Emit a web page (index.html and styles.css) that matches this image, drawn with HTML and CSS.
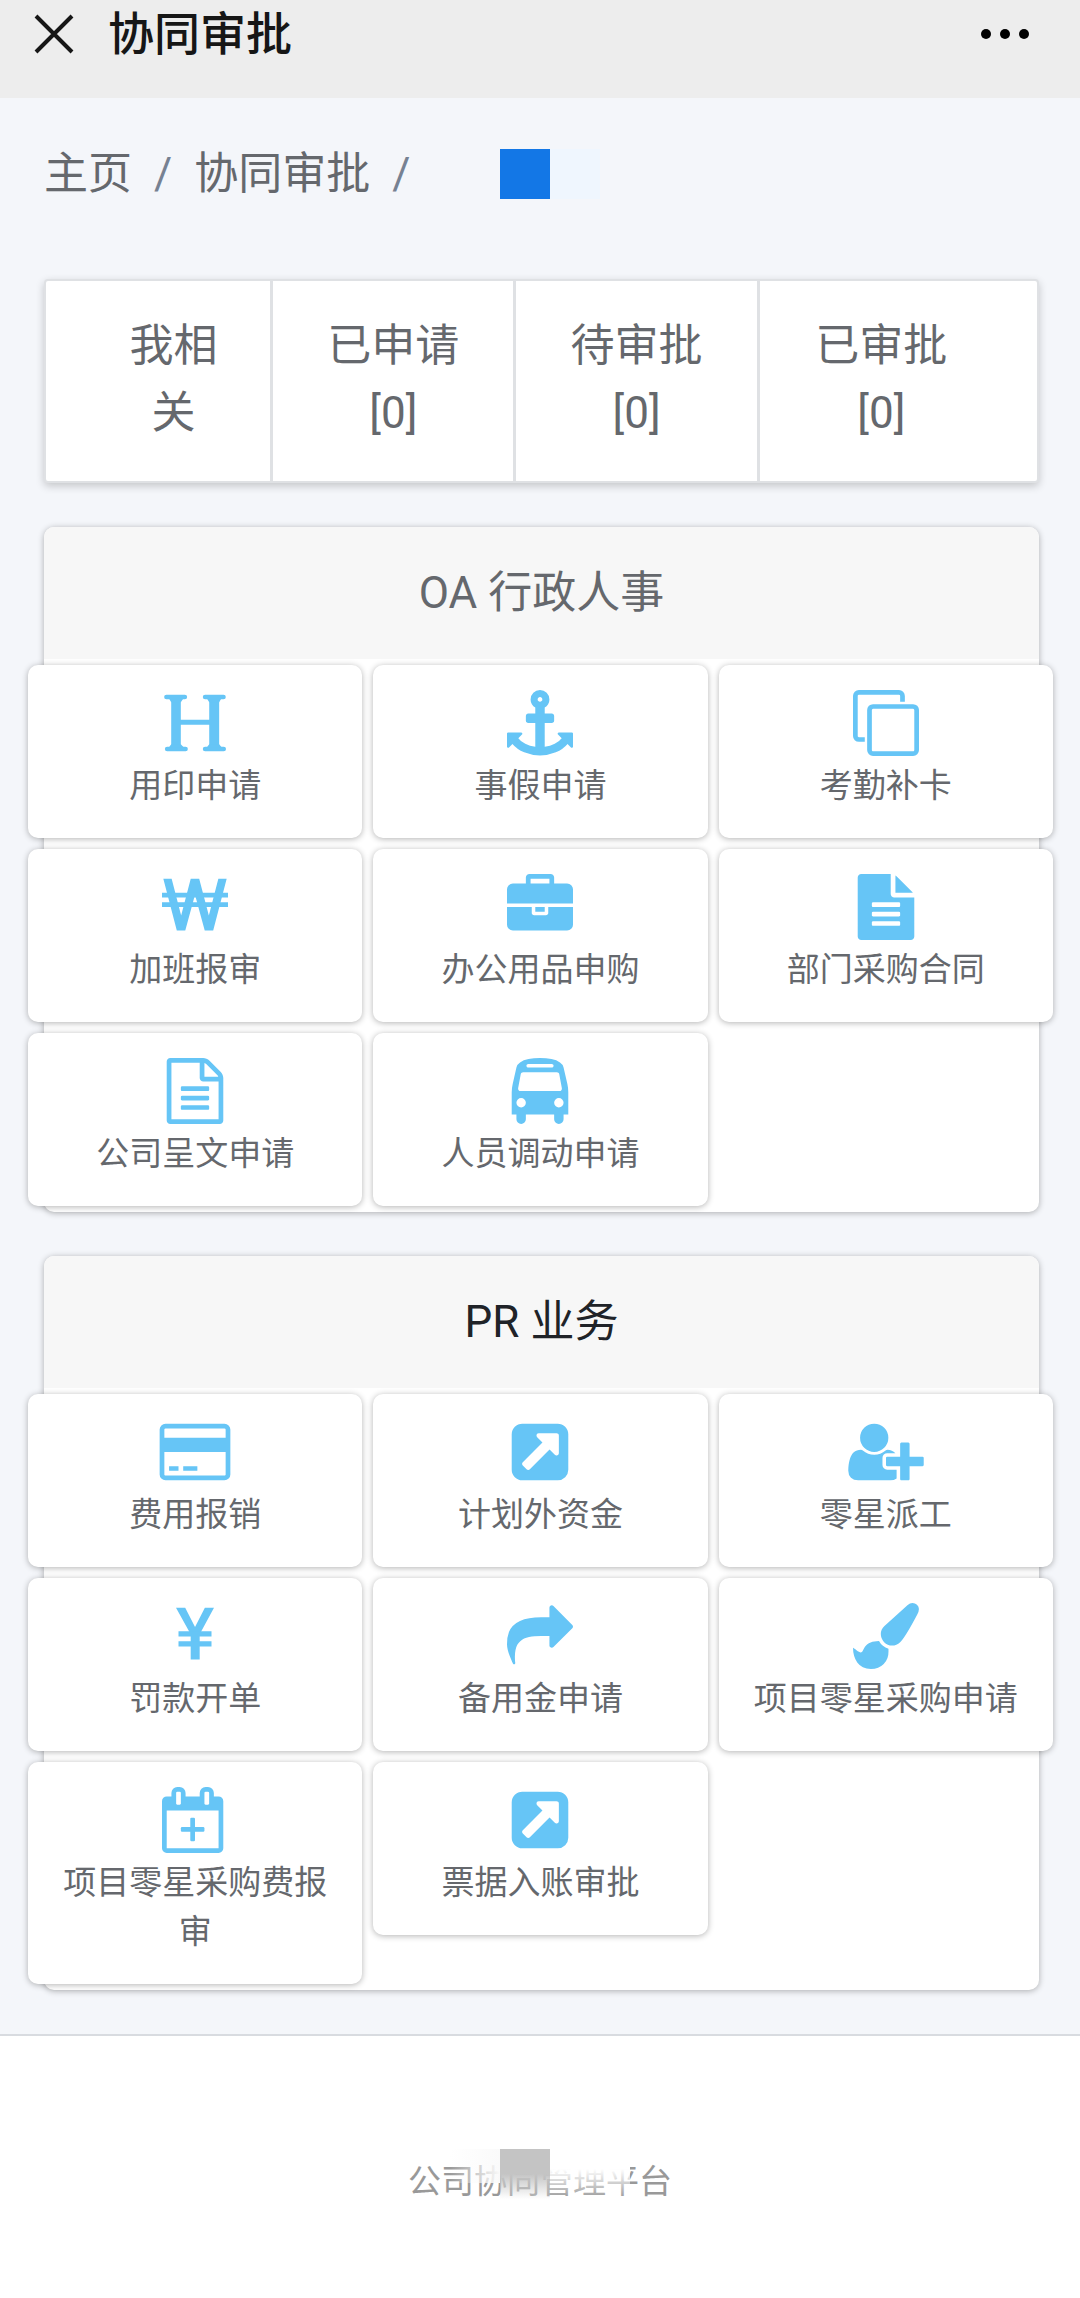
FILE: index.html
```html
<!DOCTYPE html>
<html lang="zh-CN">
<head>
<meta charset="utf-8">
<meta name="viewport" content="width=device-width, initial-scale=1">
<title>协同审批</title>
<link rel="stylesheet" href="styles.css">
</head>
<body>
<header class="topbar">
  <button class="icon-button" type="button" aria-label="关闭">
    <svg class="close-icon" viewBox="0 0 40 40"><path d="M2 2L38 38M38 2L2 38"/></svg>
  </button>
  <h1 class="topbar-title">协同审批</h1>
  <button class="icon-button" type="button" aria-label="更多">
    <svg class="more-icon" viewBox="0 0 50 12"><circle cx="6" cy="6" r="5"/><circle cx="25" cy="6" r="5"/><circle cx="44" cy="6" r="5"/></svg>
  </button>
</header>

<main class="content">
  <nav class="breadcrumb" aria-label="导航">
    <a href="#">主页</a>
    <span class="slash">/</span>
    <a href="#">协同审批</a>
    <span class="slash">/</span>
    <span class="masked"></span>
  </nav>

  <nav class="tabs" aria-label="审批">
    <a class="tab" href="#">我相关</a>
    <a class="tab" href="#">已申请 [0]</a>
    <a class="tab" href="#">待审批 [0]</a>
    <a class="tab" href="#">已审批 [0]</a>
  </nav>

  <section class="card">
    <h2 class="card-header">OA 行政人事</h2>
    <div class="tiles">
      <a class="tile" href="#">
        <svg class="icon" viewBox="0 0 1792 1792"><path d="M250 150H511V810H1282V150H1552V1640H1282V945H511V1640H250Z"/><path class="serif" d="M120 192H620M1170 192H1670M140 1604H640M1170 1604H1676"/><path d="M190 230H580L511 330H250ZM1220 230H1610L1552 330H1282ZM250 1470H511L600 1570H180ZM1282 1470H1552L1630 1570H1210Z"/></svg>
        <span>用印申请</span>
      </a>
      <a class="tile" href="#">
        <svg class="icon" viewBox="0 0 1792 1792"><path d="M960 256q0-26-19-45t-45-19-45 19-19 45 19 45 45 19 45-19 19-45zm832 928v352q0 22-20 30-8 2-12 2-12 0-23-9l-93-93q-119 143-318.500 226.500t-429.500 83.500-429.500-83.500-318.500-226.500l-93 93q-9 9-23 9-4 0-12-2-20-8-20-30v-352q0-14 9-23t23-9h352q22 0 30 20 8 19-7 35l-100 100q67 91 189.500 153.500t271.500 82.500v-647h-192q-26 0-45-19t-19-45v-128q0-26 19-45t45-19h192v-163q-58-34-93-92.500t-35-128.500q0-106 75-181t181-75 181 75 75 181q0 70-35 128.500t-93 92.500v163h192q26 0 45 19t19 45v128q0 26-19 45t-45 19h-192v647q149-20 271.500-82.500t189.500-153.500l-100-100q-15-16-7-35 8-20 30-20h352q14 0 23 9t9 23z"/></svg>
        <span>事假申请</span>
      </a>
      <a class="tile" href="#">
        <svg class="icon" viewBox="0 0 1792 1792"><path d="M1664 1632v-1088q0-13-9.500-22.500t-22.500-9.500h-1088q-13 0-22.500 9.500t-9.500 22.500v1088q0 13 9.500 22.500t22.500 9.500h1088q13 0 22.500-9.500t9.500-22.500zm128-1088v1088q0 66-47 113t-113 47h-1088q-66 0-113-47t-47-113v-1088q0-66 47-113t113-47h1088q66 0 113 47t47 113zm-384-384v160h-128v-160q0-13-9.500-22.500t-22.500-9.500h-1088q-13 0-22.500 9.500t-9.500 22.500v1088q0 13 9.500 22.500t22.500 9.500h160v128h-160q-66 0-113-47t-47-113v-1088q0-66 47-113t113-47h1088q66 0 113 47t47 113z"/></svg>
        <span>考勤补卡</span>
      </a>
      <a class="tile" href="#">
        <svg class="icon" viewBox="0 0 1792 1792"><path d="M36 128H262L520 1130 780 128H1010L1272 1130 1530 128H1756L1390 1536H1160L896 560 632 1536H402Z"/><path d="M0 512H1792V640H0ZM0 768H1792V896H0Z"/></svg>
        <span>加班报审</span>
      </a>
      <a class="tile" href="#">
        <svg class="icon" viewBox="0 0 1792 1792"><path d="M640 256h512v-128h-512v128zm1152 640v480q0 66-47 113t-113 47h-1472q-66 0-113-47t-47-113v-480h672v160q0 26 19 45t45 19h320q26 0 45-19t19-45v-160h672zm-768 0v128h-256v-128h256zm768-480v384h-1792v-384q0-66 47-113t113-47h352v-160q0-40 28-68t68-28h576q40 0 68 28t28 68v160h352q66 0 113 47t47 113z"/></svg>
        <span>办公用品申购</span>
      </a>
      <a class="tile" href="#">
        <svg class="icon" viewBox="0 0 1792 1792"><path d="M1596 476q14 14 28 36h-472v-472q22 14 36 28zm-476 164h544v1056q0 40-28 68t-68 28h-1344q-40 0-68-28t-28-68v-1600q0-40 28-68t68-28h800v544q0 40 28 68t68 28zm160 736v-64q0-14-9-23t-23-9h-704q-14 0-23 9t-9 23v64q0 14 9 23t23 9h704q14 0 23-9t9-23zm0-256v-64q0-14-9-23t-23-9h-704q-14 0-23 9t-9 23v64q0 14 9 23t23 9h704q14 0 23-9t9-23zm0-256v-64q0-14-9-23t-23-9h-704q-14 0-23 9t-9 23v64q0 14 9 23t23 9h704q14 0 23-9t9-23z"/></svg>
        <span>部门采购合同</span>
      </a>
      <a class="tile" href="#">
        <svg class="icon" viewBox="0 0 1792 1792"><path d="M1596 380q28 28 48 76t20 88v1152q0 40-28 68t-68 28h-1344q-40 0-68-28t-28-68v-1600q0-40 28-68t68-28h896q40 0 88 20t76 48zm-444-244v376h376q-10-29-22-41l-313-313q-12-12-41-22zm384 1528v-1024h-416q-40 0-68-28t-28-68v-416h-768v1536h1280zm-1024-864q0-14 9-23t23-9h704q14 0 23 9t9 23v64q0 14-9 23t-23 9h-704q-14 0-23-9t-9-23v-64zm736 224q14 0 23 9t9 23v64q0 14-9 23t-23 9h-704q-14 0-23-9t-9-23v-64q0-14 9-23t23-9h704zm0 256q14 0 23 9t9 23v64q0 14-9 23t-23 9h-704q-14 0-23-9t-9-23v-64q0-14 9-23t23-9h704z"/></svg>
        <span>公司呈文申请</span>
      </a>
      <a class="tile" href="#">
        <svg class="icon" viewBox="0 0 1792 1792"><path d="M512 1216q0-53-37.500-90.500t-90.500-37.500-90.500 37.500-37.500 90.500 37.500 90.500 90.500 37.500 90.500-37.500 37.500-90.500zm1024 0q0-53-37.500-90.500t-90.500-37.500-90.500 37.500-37.500 90.500 37.500 90.500 90.500 37.500 90.500-37.500 37.500-90.500zm-46-396l-72-384q-5-23-22.500-37.500t-40.500-14.500h-918q-23 0-40.500 14.500t-22.500 37.500l-72 384q-5 30 14 53t49 23h1062q30 0 49-23t14-53zm-226-612q0-20-14-34t-34-14h-640q-20 0-34 14t-14 34 14 34 34 14h640q20 0 34-14t14-34zm400 725v603h-128v128q0 53-37.500 90.500t-90.500 37.500-90.500-37.500-37.500-90.500v-128h-768v128q0 53-37.500 90.500t-90.500 37.500-90.500-37.500-37.500-90.500v-128h-128v-603q0-112 25-223l103-454q9-78 97.500-137t230-89 312.500-30 312.500 30 230 89 97.500 137l105 454q23 102 23 223z"/></svg>
        <span>人员调动申请</span>
      </a>
    </div>
  </section>

  <section class="card">
    <h2 class="card-header card-header-dark">PR 业务</h2>
    <div class="tiles">
      <a class="tile" href="#">
        <svg class="icon" viewBox="64 0 1792 1792"><path d="M1760 128q66 0 113 47t47 113v1216q0 66-47 113t-113 47h-1600q-66 0-113-47t-47-113v-1216q0-66 47-113t113-47h1600zm-1600 128q-13 0-22.500 9.500t-9.500 22.500v224h1664v-224q0-13-9.500-22.500t-22.500-9.500h-1600zm1600 1280q13 0 22.500-9.500t9.500-22.500v-608h-1664v608q0 13 9.500 22.500t22.500 9.500h1600zm-1504-128v-128h256v128h-256zm384 0v-128h384v128h-384z"/></svg>
        <span>费用报销</span>
      </a>
      <a class="tile" href="#">
        <svg class="icon" viewBox="0 0 1792 1792"><path d="M1408 928v-480q0-26-19-45t-45-19h-480q-42 0-59 39-17 41 14 70l144 144-534 534q-19 19-19 45t19 45l102 102q19 19 45 19t45-19l534-534 144 144q18 19 45 19 12 0 25-5 39-17 39-59zm256-512v960q0 119-84.500 203.500t-203.500 84.500h-960q-119 0-203.500-84.500t-84.500-203.500v-960q0-119 84.500-203.500t203.500-84.500h960q119 0 203.500 84.500t84.500 203.500z"/></svg>
        <span>计划外资金</span>
      </a>
      <a class="tile" href="#">
        <svg class="icon" viewBox="128 0 1792 1792"><path d="M704 896q-159 0-271.500-112.500t-112.500-271.500 112.500-271.500 271.500-112.500 271.500 112.500 112.500 271.500-112.500 271.500-271.500 112.500zm960 128h352q13 0 22.500 9.500t9.500 22.500v192q0 13-9.500 22.500t-22.500 9.500h-352v352q0 13-9.500 22.500t-22.500 9.500h-192q-13 0-22.500-9.500t-9.500-22.500v-352h-352q-13 0-22.500-9.500t-9.500-22.500v-192q0-13 9.500-22.500t22.500-9.500h352v-352q0-13 9.500-22.500t22.500-9.500h192q13 0 22.500 9.500t9.500 22.500v352zm-736 224q0 52 38 90t90 38h256v238q-68 50-171 50h-874q-121 0-194-69t-73-190q0-53 3.500-103.500t14-109 26.500-108.500 43-97.500 62-81 85.500-53.500 111.500-20q19 0 39 17 79 61 154.500 91.500t164.500 30.500 164.500-30.500 154.500-91.500q20-17 39-17 132 0 217 96h-223q-52 0-90 38t-38 90v192z"/></svg>
        <span>零星派工</span>
      </a>
      <a class="tile" href="#">
        <svg class="icon" viewBox="0 0 1792 1792"><path d="M380 128H630L897 650 1164 128H1412L1023 850V1536H779V850Z"/><path d="M448 768H1344V912H448ZM448 1040H1344V1184H448Z"/></svg>
        <span>罚款开单</span>
      </a>
      <a class="tile" href="#">
        <svg class="icon" viewBox="0 0 1792 1792"><path d="M1792 640q0 26-19 45l-512 512q-19 19-45 19t-45-19-19-45v-256h-224q-98 0-175.500 6t-154 21.500-133 42.500-105.500 69.500-80 101-48.500 138.500-17.500 181q0 55 5 123 0 6 2.500 23.500t2.500 26.500q0 15-8.500 25t-23.500 10q-16 0-28-17-7-9-13-22t-13.500-30-10.500-24q-127-285-127-451 0-199 53-333 162-403 875-403h224v-256q0-26 19-45t45-19 45 19l512 512q19 19 19 45z"/></svg>
        <span>备用金申请</span>
      </a>
      <a class="tile" href="#">
        <svg class="icon" viewBox="0 0 1792 1792"><path d="M1615 0q70 0 122.500 46.500t52.500 116.500q0 63-45 151-332 629-465 752-97 91-218 91-126 0-216.500-92.500t-90.500-219.500q0-128 92-212l638-579q59-54 130-54zm-909 1034q39 76 106.500 130t150.500 76l1 71q4 213-129.500 347t-348.500 134q-123 0-218-46.500t-152.500-127.500-86.500-183-29-220q7 5 41 30t62 44.500 59 36.500 46 17q41 0 55-37 25-66 57.500-112.500t69.500-76 88-47.500 103-25.500 125-10.500z"/></svg>
        <span>项目零星采购申请</span>
      </a>
      <a class="tile" href="#">
        <svg class="icon" viewBox="0 0 1792 1792"><path fill-rule="evenodd" d="M128 256h128v-96q0-66 47-113t113-47h64q66 0 113 47t47 113v96h384v-96q0-66 47-113t113-47h64q66 0 113 47t47 113v96h128q52 0 90 38t38 90v1280q0 52-38 90t-90 38h-1408q-52 0-90-38t-38-90v-1280q0-52 38-90t90-38zM128 1664h1408v-1024h-1408zM384 160v288q0 14 9 23t23 9h64q14 0 23-9t9-23v-288q0-14-9-23t-23-9h-64q-14 0-23 9t-9 23zM1152 160v288q0 14 9 23t23 9h64q14 0 23-9t9-23v-288q0-14-9-23t-23-9h-64q-14 0-23 9t-9 23z"/><rect x="512" y="1088" width="640" height="128" rx="32"/><rect x="768" y="832" width="128" height="640" rx="32"/></svg>
        <span>项目零星采购费报审</span>
      </a>
      <a class="tile" href="#">
        <svg class="icon" viewBox="0 0 1792 1792"><path d="M1408 928v-480q0-26-19-45t-45-19h-480q-42 0-59 39-17 41 14 70l144 144-534 534q-19 19-19 45t19 45l102 102q19 19 45 19t45-19l534-534 144 144q18 19 45 19 12 0 25-5 39-17 39-59zm256-512v960q0 119-84.500 203.500t-203.500 84.500h-960q-119 0-203.500-84.500t-84.500-203.500v-960q0-119 84.500-203.500t203.500-84.500h960q119 0 203.500 84.500t84.500 203.500z"/></svg>
        <span>票据入账审批</span>
      </a>
    </div>
  </section>
</main>

<footer class="footer">
  <span class="footer-text">公司协同管理平台<span class="footer-mask"></span></span>
</footer>
</body>
</html>
```

FILE: styles.css
```css
* {
  box-sizing: border-box;
}

body {
  margin: 0;
  min-height: 100vh;
  display: flex;
  flex-direction: column;
  background: #f4f6fa;
  color: #65686d;
  font-family: Roboto, "Noto Sans CJK SC", sans-serif;
  font-size: 44px;
  line-height: 68px;
}

a {
  color: inherit;
  text-decoration: none;
}

/* Top bar */
.topbar {
  display: flex;
  align-items: center;
  padding: 0 50px 30px 32px;
  background: #ededed;
  color: #161616;
}

.topbar-title {
  flex: 1;
  margin: 0 0 0 32px;
  font-size: 46px;
  font-weight: 500;
}

.icon-button {
  display: flex;
  padding: 0;
  border: 0;
  background: none;
}

.close-icon {
  width: 44px;
  height: 40px;
  fill: none;
  stroke: #161616;
  stroke-width: 4;
}

.more-icon {
  width: 50px;
  height: 12px;
  fill: #000;
}

/* Main column */
.content {
  display: flex;
  flex-direction: column;
  gap: 44px;
  padding: 42px 41px 44px 44px;
}

.breadcrumb {
  display: flex;
  align-items: center;
  margin-bottom: 27px;
}

.slash {
  padding: 0 22px;
  color: #768192;
}

.masked {
  width: 100px;
  height: 50px;
  margin-left: 68px;
  background: linear-gradient(to right, #1377e6 50%, #eff6fe 50%);
}

.tabs {
  display: grid;
  grid-template-columns: 196fr 243fr 243fr 243fr;
  padding: 0 34px 0 31px;
  border: 2px solid #dfe1e4;
  border-radius: 4px;
  background: #fff;
  box-shadow: 0 3px 8px rgba(0, 0, 0, 0.2);
}

.tab {
  padding: 32px 40px 34px;
  border-right: 3px solid #dfe1e4;
  line-height: 67px;
  text-align: center;
}

.tab:last-child {
  border-right: 0;
}

.card {
  border-radius: 10px;
  background: #fff;
  box-shadow: 0 1px 6px rgba(0, 0, 0, 0.3);
}

.card-header {
  margin: 0;
  padding: 32px 0;
  border-radius: 10px 10px 0 0;
  background: #f7f7f7;
  font-size: 44px;
  font-weight: 400;
  text-align: center;
}

.card-header-dark {
  color: #202328;
}

/* The tiles are wider than the card that holds them */
.tiles {
  display: grid;
  grid-template-columns: repeat(3, 1fr);
  align-items: start;
  gap: 11px;
  margin: 0 -14px 0 -16px;
  padding: 6px 0;
}

.tile {
  display: flex;
  flex-direction: column;
  align-items: center;
  gap: 5px;
  padding: 25px 32px 28px;
  border-radius: 10px;
  background: #fff;
  box-shadow: 0 1px 6px rgba(0, 0, 0, 0.3);
  font-size: 33px;
  line-height: 49px;
  text-align: center;
}

.icon {
  width: 66px;
  height: 66px;
  overflow: visible;
  fill: #66c5f6;
}

.serif {
  fill: none;
  stroke: #66c5f6;
  stroke-width: 124;
  stroke-linecap: round;
}

/* Footer */
.footer {
  flex: 1;
  padding: 121px 24px 90px;
  border-top: 2px solid #d8dbe0;
  background: #fff;
  color: #999;
  font-size: 33px;
  line-height: 49px;
  text-align: center;
}

.footer-text {
  position: relative;
  display: inline-block;
}

.footer-mask {
  position: absolute;
  top: -8px;
  left: 42px;
  width: 180px;
  height: 50px;
  background:
    linear-gradient(#c4c4c4 50%, rgba(255, 255, 255, 0.2)) 50px 0 / 50px 50px no-repeat,
    linear-gradient(to right, rgba(250, 250, 250, 0), #fafafa) 0 0 / 50px 34px no-repeat,
    linear-gradient(#fff 40%, rgba(255, 255, 255, 0)) 100px 0 / 80px 50px no-repeat;
}
```
